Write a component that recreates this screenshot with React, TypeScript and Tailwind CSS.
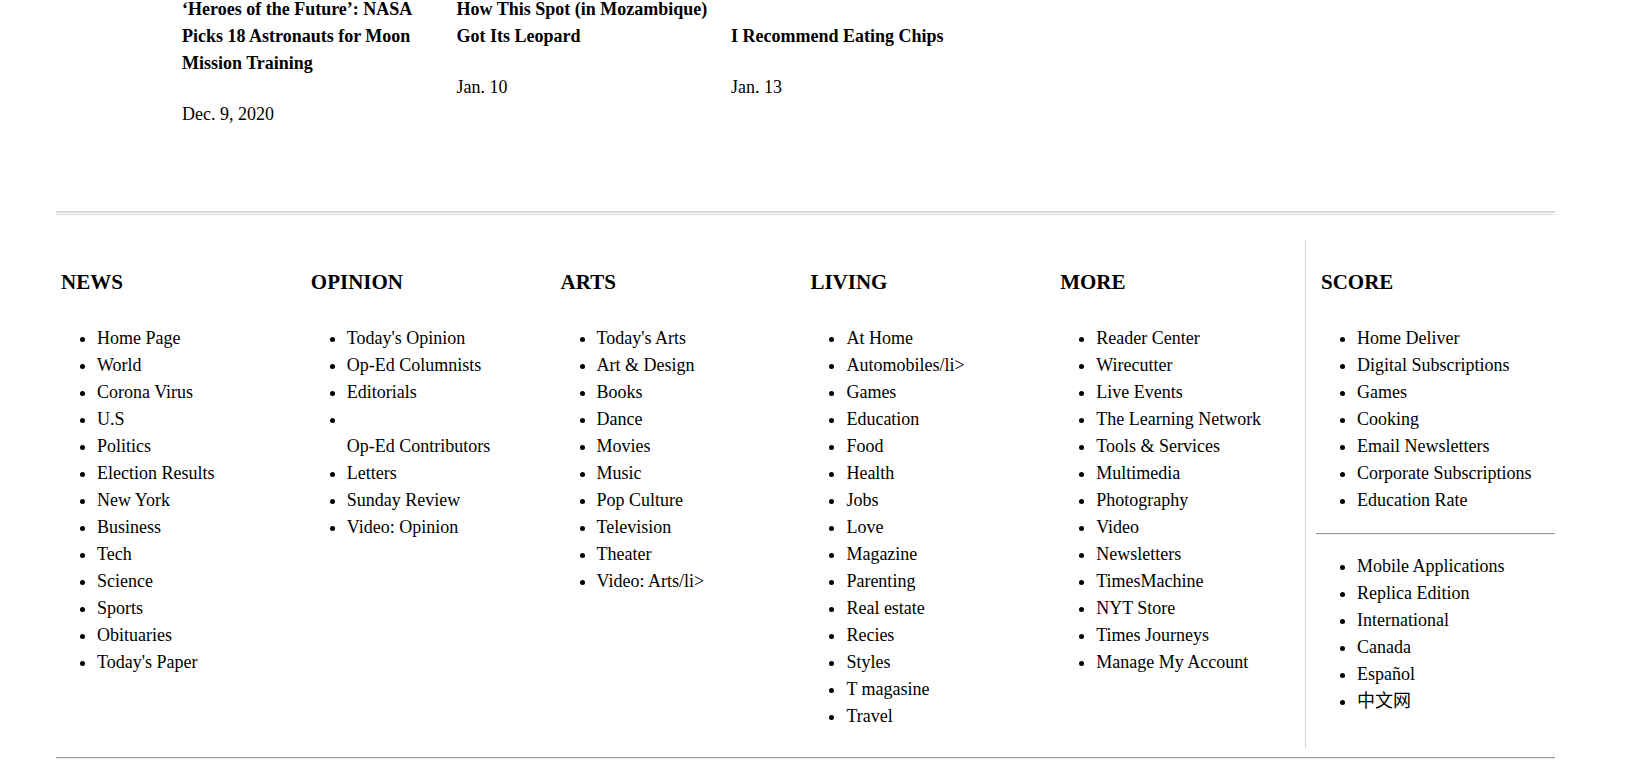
import React from "react";

const stories = [
  {
    title: "‘Heroes of the Future’: NASA Picks 18 Astronauts for Moon Mission Training",
    date: "Dec. 9, 2020",
    offset: "",
  },
  {
    title: "How This Spot (in Mozambique) Got Its Leopard",
    date: "Jan. 10",
    offset: "",
  },
  {
    title: "I Recommend Eating Chips",
    date: "Jan. 13",
    offset: "pt-[27px]",
  },
];

const sections: { title: string; links: string[] }[] = [
  {
    title: "NEWS",
    links: [
      "Home Page",
      "World",
      "Corona Virus",
      "U.S",
      "Politics",
      "Election Results",
      "New York",
      "Business",
      "Tech",
      "Science",
      "Sports",
      "Obituaries",
      "Today's Paper",
    ],
  },
  {
    title: "OPINION",
    links: [
      "Today's Opinion",
      "Op-Ed Columnists",
      "Editorials",
      "\nOp-Ed Contributors",
      "Letters",
      "Sunday Review",
      "Video: Opinion",
    ],
  },
  {
    title: "ARTS",
    links: [
      "Today's Arts",
      "Art & Design",
      "Books",
      "Dance",
      "Movies",
      "Music",
      "Pop Culture",
      "Television",
      "Theater",
      "Video: Arts/li>",
    ],
  },
  {
    title: "LIVING",
    links: [
      "At Home",
      "Automobiles/li>",
      "Games",
      "Education",
      "Food",
      "Health",
      "Jobs",
      "Love",
      "Magazine",
      "Parenting",
      "Real estate",
      "Recies",
      "Styles",
      "T magasine",
      "Travel",
    ],
  },
  {
    title: "MORE",
    links: [
      "Reader Center",
      "Wirecutter",
      "Live Events",
      "The Learning Network",
      "Tools & Services",
      "Multimedia",
      "Photography",
      "Video",
      "Newsletters",
      "TimesMachine",
      "NYT Store",
      "Times Journeys",
      "Manage My Account",
    ],
  },
];

const subscribe = [
  "Home Deliver",
  "Digital Subscriptions",
  "Games",
  "Cooking",
  "Email Newsletters",
  "Corporate Subscriptions",
  "Education Rate",
];

const extras = [
  "Mobile Applications",
  "Replica Edition",
  "International",
  "Canada",
  "Español",
  "中文网",
];

function LinkItem({ label }: { label: string }) {
  const broken = label.startsWith("\n");
  return (
    <li>
      {broken && <br />}
      <a href="#" className="text-black">
        {broken ? label.slice(1) : label}
      </a>
    </li>
  );
}

export default function App() {
  return (
    <div className="min-h-screen bg-white text-black font-['Liberation_Serif','Noto_Sans_CJK_SC',serif] text-[18px] leading-[27px] overflow-hidden">
      {/* latest stories */}
      <div className="-mt-[4px] ml-[182px] grid grid-cols-[274.5px_274.5px_274.5px]">
        {stories.map((s) => (
          <div key={s.title} className={`pr-[20px] ${s.offset}`}>
            <h4 className="font-bold">{s.title}</h4>
            <p className="mt-[24px]">{s.date}</p>
          </div>
        ))}
      </div>

      <footer className="ml-[56px] w-[1499px] mt-[83px]">
        <div className="h-[4px] border-t-2 border-b border-[#dadada]" />

        <div className="mt-[25px] flex items-stretch pb-[18px]">
          {sections.map((sec) => (
            <div key={sec.title} className="w-[249.8px] pl-[5px] pt-[27px]">
              <h3 className="text-[21px] leading-[31.5px] font-bold">
                {sec.title}
              </h3>
              <ul className="mt-[26px] pl-[36px] list-disc">
                {sec.links.map((l) => (
                  <LinkItem key={l} label={l} />
                ))}
              </ul>
            </div>
          ))}

          <div className="flex-1 border-l border-[#d3d3d3] pl-[10px] pt-[27px] -mb-[18px]">
            <h3 className="pl-[5px] text-[21px] leading-[31.5px] font-bold">
              SCORE
            </h3>
            <ul className="mt-[26px] pl-[41px] list-disc">
              {subscribe.map((l) => (
                <LinkItem key={l} label={l} />
              ))}
            </ul>
            <div className="mt-[19px] border-t border-b border-t-[#9a9a9a] border-b-[#eeeeee]" />
            <ul className="mt-[18px] pl-[41px] list-disc">
              {extras.map((l) => (
                <LinkItem key={l} label={l} />
              ))}
            </ul>
          </div>
        </div>

        <div className="mt-[9px] border-t border-b border-t-[#9a9a9a] border-b-[#e6e6e6]" />
      </footer>
    </div>
  );
}
